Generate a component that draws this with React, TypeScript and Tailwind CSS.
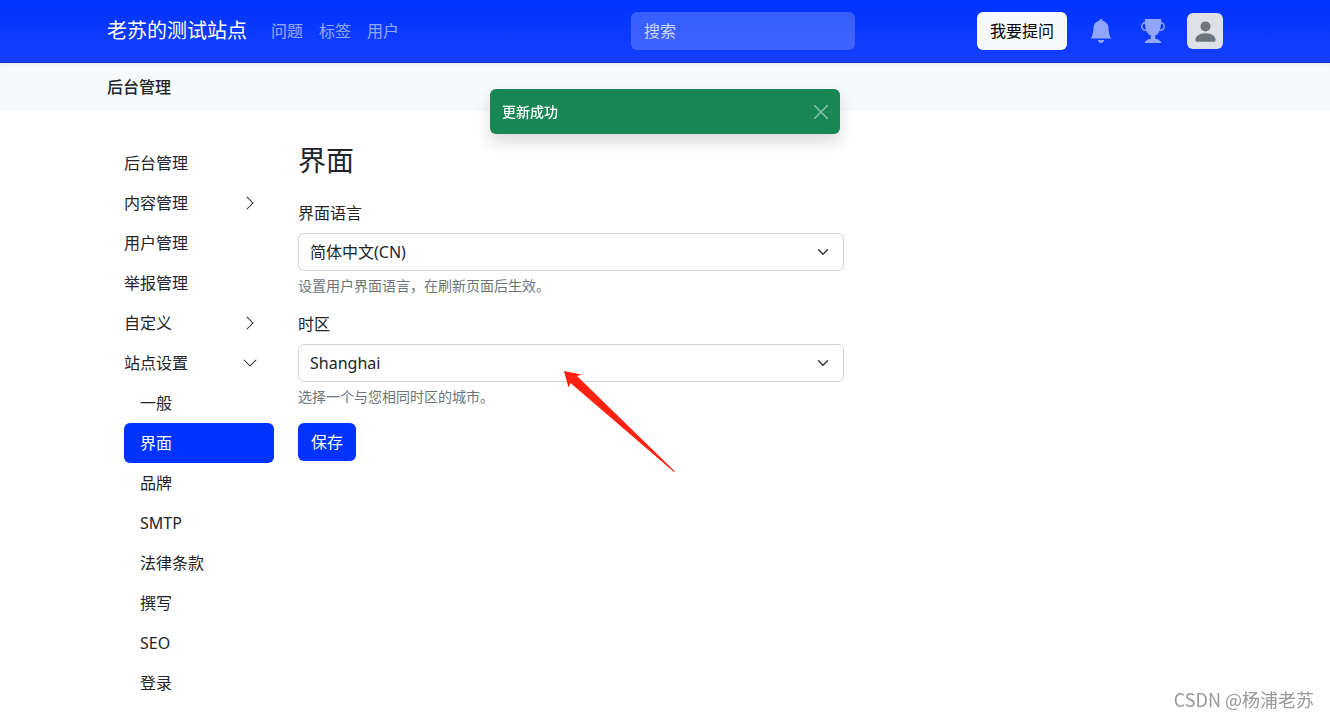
import { useState } from "react";
import clsx from "clsx";
import {
  BsBellFill,
  BsChevronDown,
  BsChevronRight,
  BsPersonFill,
  BsTrophyFill,
} from "react-icons/bs";

type MenuEntry = {
  name: string;
  children?: string[];
};

const navLinks = ["问题", "标签", "用户"];

const adminMenu: MenuEntry[] = [
  { name: "后台管理" },
  { name: "内容管理", children: ["问题", "回答"] },
  { name: "用户管理" },
  { name: "举报管理" },
  { name: "自定义", children: ["主题", "CSS/HTML"] },
  {
    name: "站点设置",
    children: ["一般", "界面", "品牌", "SMTP", "法律条款", "撰写", "SEO", "登录"],
  },
];

const Header = () => (
  <header className="relative z-10 border-b border-[#0c34d6] bg-linear-to-b from-[#0033ff] to-[#143fff] shadow-[0_2px_4px_rgba(0,0,0,0.075)]">
    <div className="mx-auto flex h-[62px] max-w-[1140px] items-center px-3">
      <a href="#" className="text-xl text-white">
        老苏的测试站点
      </a>
      <nav className="ml-6 flex gap-4">
        {navLinks.map((link) => (
          <a key={link} href="#" className="text-white/55 hover:text-white/75">
            {link}
          </a>
        ))}
      </nav>

      <input
        type="search"
        aria-label="搜索"
        placeholder="搜索"
        className="mr-[122px] ml-auto h-[38px] w-56 rounded-md bg-white/20 px-[13px] text-white outline-none placeholder:text-white/75"
      />

      {/* Right side */}
      <button className="h-[38px] rounded-md bg-[#f8f9fa] px-[13px] text-black">
        我要提问
      </button>
      <div className="ml-[22px] flex items-center text-white/55">
        <button aria-label="通知" className="mr-7">
          <BsBellFill size={24} />
        </button>
        <button aria-label="成就" className="mr-[22px]">
          <BsTrophyFill size={24} />
        </button>
        <button
          aria-label="我的账号"
          className="flex size-9 items-center justify-center rounded-md bg-[#dee2e6] text-[#6c757d]"
        >
          <BsPersonFill size={27} />
        </button>
      </div>
    </div>
  </header>
);

const Toast = ({ text, onClose }: { text: string; onClose: () => void }) => (
  <div
    role="alert"
    className="fixed top-[89px] left-1/2 z-20 flex h-[45px] w-[350px] -translate-x-1/2 items-center justify-between rounded-md bg-[#198754] px-3 text-sm font-medium text-white shadow-[0_8px_16px_rgba(0,0,0,0.15)]"
  >
    {text}
    <button aria-label="关闭" onClick={onClose} className="opacity-50">
      <svg width="14" height="14" viewBox="0 0 14 14" stroke="currentColor" strokeWidth="1.5" strokeLinecap="round">
        <path d="M0.5 0.5l13 13M13.5 0.5l-13 13" />
      </svg>
    </button>
  </div>
);

const Sidebar = () => {
  const [open, setOpen] = useState("站点设置");
  const [active, setActive] = useState("界面");

  return (
    <nav className="w-[166px] shrink-0">
      {adminMenu.map(({ name, children }) => (
        <div key={name}>
          <button
            className="flex h-10 w-full items-center justify-between px-4"
            onClick={() => setOpen(open === name ? "" : name)}
          >
            {name}
            {children && (open === name ? <BsChevronDown size={16} /> : <BsChevronRight size={16} />)}
          </button>
          {children && open === name && (
            <div className="ml-4">
              {children.map((child) => (
                <a
                  key={child}
                  href="#"
                  onClick={() => setActive(child)}
                  className={clsx(
                    "flex h-10 items-center rounded-md px-4",
                    child === active && "bg-[#0033ff] text-white"
                  )}
                >
                  {child}
                </a>
              ))}
            </div>
          )}
        </div>
      ))}
    </nav>
  );
};

type SelectFieldProps = {
  id: string;
  label: string;
  help: string;
  options: string[];
};

const SelectField = ({ id, label, help, options }: SelectFieldProps) => (
  <div className="mb-4">
    <label htmlFor={id} className="mb-2 block">
      {label}
    </label>
    <div className="relative">
      <select
        id={id}
        className="block h-[38px] w-full appearance-none rounded-md border border-[#ced4da] bg-white px-[11px]"
      >
        {options.map((option) => (
          <option key={option}>{option}</option>
        ))}
      </select>
      <svg
        className="pointer-events-none absolute inset-y-0 right-[13px] my-auto h-3 w-4"
        viewBox="0 0 16 16"
        fill="none"
        stroke="#343a40"
        strokeWidth="2"
        strokeLinecap="round"
        strokeLinejoin="round"
      >
        <path d="m2 5 6 6 6-6" />
      </svg>
    </div>
    <p className="mt-1 text-sm/[21px] text-[#6c757d]">{help}</p>
  </div>
);

// Points at the timezone select
const Arrow = () => (
  <svg
    className="pointer-events-none absolute top-[228px] left-[266px]"
    width="112"
    height="102"
    viewBox="0 0 112 102"
    fill="#ff2112"
  >
    <path d="M0 0 17.5 3.5 13 5 111 100.5 110 101 6.5 12 4.5 16.5Z" />
  </svg>
);

export default function App() {
  const [toast, setToast] = useState(true);

  return (
    <div className="font-['Noto_Sans','Noto_Sans_CJK_SC',sans-serif] text-base text-[#212529]">
      <Header />
      {toast && <Toast text="更新成功" onClose={() => setToast(false)} />}

      <div className="bg-[#f8f9fa]">
        <div className="mx-auto flex h-12 max-w-[1140px] items-center px-3 font-medium">
          后台管理
        </div>
      </div>

      <div className="mx-auto flex max-w-[1138px] gap-6 px-3 pt-8">
        <Sidebar />
        <main className="relative min-w-0 flex-1">
          <h3 className="mb-6 text-[28px]/[34px]">界面</h3>
          <form className="max-w-[546px]" onSubmit={(e) => e.preventDefault()}>
            <SelectField
              id="language"
              label="界面语言"
              help="设置用户界面语言，在刷新页面后生效。"
              options={["简体中文(CN)", "English"]}
            />
            <SelectField
              id="timezone"
              label="时区"
              help="选择一个与您相同时区的城市。"
              options={["Shanghai", "Hong Kong"]}
            />
            <button type="submit" className="h-[38px] rounded-md bg-[#0033ff] px-[13px] text-white">
              保存
            </button>
          </form>
          <Arrow />
        </main>
      </div>

      <div className="fixed right-4 bottom-1 font-['Noto_Sans_CJK_SC',sans-serif] text-lg text-[#999]">
        CSDN @杨浦老苏
      </div>
    </div>
  );
}
